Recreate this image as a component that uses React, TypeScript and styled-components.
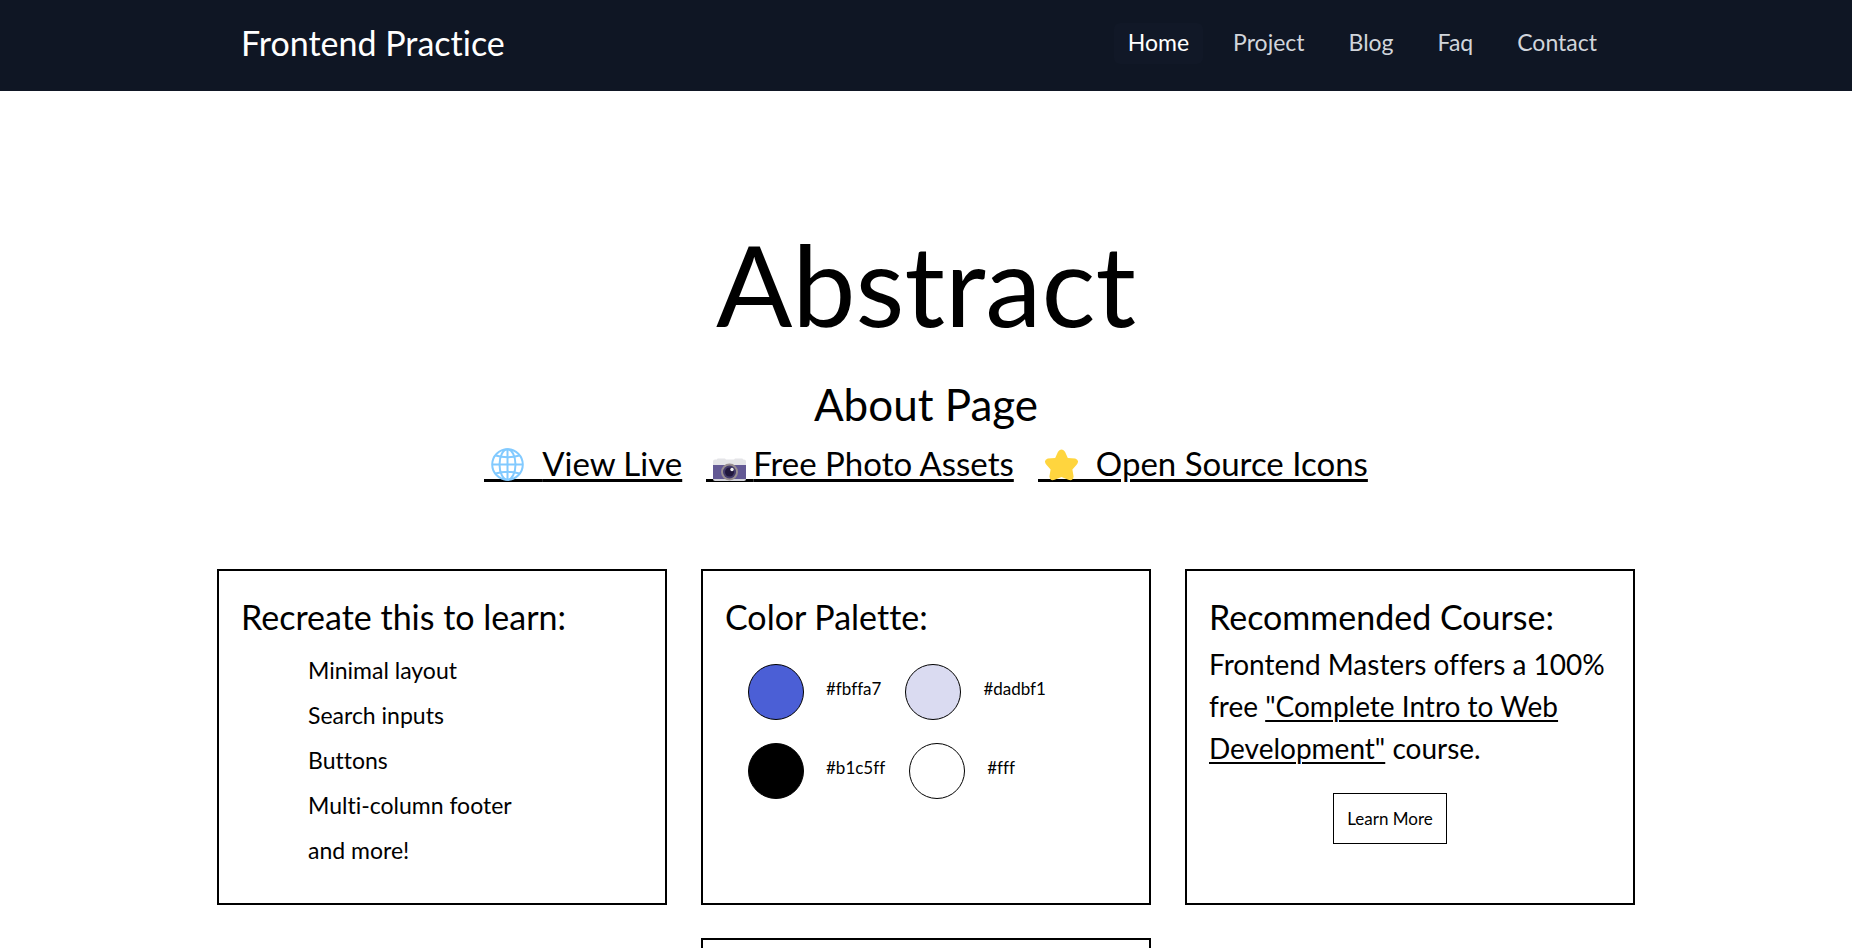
import React from "react";
import styled, { createGlobalStyle } from "styled-components";

const GlobalStyle = createGlobalStyle`
  *, *::before, *::after { box-sizing: border-box; }
  body {
    margin: 0;
    background: #fff;
    color: #000;
    font-family: Lato, "Liberation Sans", sans-serif;
    font-variant-ligatures: none;
  }
  h1, h2, h3, p, ul { margin: 0; padding: 0; font-weight: 400; }
  ul { list-style: none; }
  a { color: inherit; }
`;

const Header = styled.header`
  background: #0f1624;
  padding: 23px 24px 27px;
`;

const HeaderInner = styled.div`
  display: flex;
  flex-wrap: wrap;
  justify-content: space-between;
  align-items: flex-start;
  max-width: 1418px;
  margin: 0 auto;
  padding: 0 24px;
`;

const Brand = styled.a`
  color: #fff;
  font-size: 34px;
  line-height: 39px;
  text-decoration: none;
`;

const Nav = styled.nav`
  display: flex;
  flex-wrap: wrap;
  gap: 16px;
`;

const NavLink = styled.a<{ $active?: boolean }>`
  padding: 0 14px 2px;
  border-radius: 6px;
  background: ${(p) => (p.$active ? "#111827" : "transparent")};
  color: ${(p) => (p.$active ? "#fff" : "#d1d5db")};
  font-size: 23px;
  line-height: 39px;
  text-decoration: none;
`;

const Hero = styled.section`
  display: flex;
  flex-direction: column;
  align-items: center;
  padding: 122px 24px 77px;
  text-align: center;
`;

const Title = styled.h1`
  font-size: 113px;
  line-height: 140px;
`;

const Subtitle = styled.h2`
  margin-top: 21px;
  font-size: 44px;
  line-height: 60px;
`;

const HeroLinks = styled.div`
  display: flex;
  flex-wrap: wrap;
  justify-content: center;
  gap: 0 24px;
`;

const HeroLink = styled.a`
  font-size: 33px;
  line-height: 58px;
  text-decoration: underline 3px;
  text-underline-offset: 3px;
`;

/* Continues the link's underline beneath its icon. */
const IconSlot = styled.span<{ $wide?: boolean }>`
  display: inline-flex;
  align-items: flex-end;
  width: ${(p) => (p.$wide ? 58 : 47)}px;
  height: 34px;
  padding-left: 7px;
  border-bottom: 3px solid #000;
  vertical-align: -5px;

  svg {
    flex: none;
    width: 33px;
    height: 33px;
    margin-bottom: -2px;
  }
`;

const Cards = styled.main`
  display: grid;
  grid-template-columns: repeat(3, minmax(0, 1fr));
  gap: 33px 34px;
  max-width: 1418px;
  margin: 0 auto;

  @media (max-width: 1100px) {
    grid-template-columns: minmax(0, 1fr);
    padding: 0 24px;
  }
`;

const Card = styled.section<{ $middle?: boolean }>`
  min-height: 336px;
  padding: 24px 22px;
  border: 2px solid #000;

  @media (min-width: 1101px) {
    grid-column: ${(p) => (p.$middle ? "2" : "auto")};
  }
`;

const CardTitle = styled.h3`
  font-size: 34px;
  line-height: 44px;
`;

const TopicList = styled.ul`
  padding: 9px 0 0 67px;
  font-size: 23px;
  line-height: 45px;
`;

const Palette = styled.div`
  display: flex;
  flex-direction: column;
  gap: 23px;
  padding: 25px 0 0 23px;
`;

const PaletteRow = styled.div`
  display: flex;
  gap: 24px;
`;

const Swatch = styled.div`
  display: flex;
  align-items: center;
  gap: 22px;
`;

const Dot = styled.span<{ $color: string }>`
  width: 56px;
  height: 56px;
  border: 1px solid #000;
  border-radius: 50%;
  background: ${(p) => p.$color};
`;

const SwatchLabel = styled.span`
  padding-bottom: 6px;
  font-size: 17px;
  line-height: 24px;
`;

const CourseText = styled.p`
  margin-top: 4px;
  font-size: 28px;
  line-height: 42px;

  a {
    text-decoration-thickness: 2px;
    text-underline-offset: 3px;
  }
`;

const CardAction = styled.div`
  display: flex;
  justify-content: center;
  margin-top: 24px;
  padding-right: 40px;
`;

const Button = styled.button`
  padding: 12px 13px;
  border: 1px solid #000;
  background: #fff;
  color: #000;
  font: inherit;
  font-size: 17px;
  line-height: 25px;
  cursor: pointer;
`;

const GlobeIcon = () => (
  <svg viewBox="0 0 33 33" fill="none" stroke="#82caff" strokeWidth="2" aria-hidden="true">
    <circle cx="16.5" cy="16.5" r="15.3" />
    <ellipse cx="16.5" cy="16.5" rx="8" ry="15.3" />
    <path d="M16.5 1v31M1 16.5h31M4.5 7.5Q16.5 11 28.5 7.5M4.5 25.5Q16.5 22 28.5 25.5" />
  </svg>
);

const CameraIcon = () => (
  <svg viewBox="0 0 33 33" aria-hidden="true">
    <path d="M5 10.5h7l1 1h8l1-1h7q1 0 1 1h1q2 0 2 2V18H0v-4.500q0-2 2-2h2q0-1 1-1z" fill="#e4e4e7" />
    <path d="M0 17h33v14H0z" fill="#635994" />
    <path d="M0 31h33q0 2-2 2H2q-2 0-2-2z" fill="#d3d3d9" />
    <circle cx="16.500" cy="24" r="8.500" fill="#998f91" />
    <circle cx="16.500" cy="24" r="6.500" fill="#433b6b" />
    <circle cx="16.500" cy="24" r="4.500" fill="#21183c" />
    <circle cx="19" cy="21.500" r="1.700" fill="#f4f4f4" />
  </svg>
);

const StarIcon = () => (
  <svg viewBox="0 0 33 33" fill="#ffd53e" aria-hidden="true">
    <path d="M13 3.800Q16.500-.8 20 3.800L22.800 10L30.200 10.600Q35 12.400 31.600 16.800L27.400 21.500L28.600 28.500Q28 33.400 23.300 31.700L16.500 29L9.700 31.700Q5 33.400 4.400 28.500L5.600 21.500L1.400 16.800Q-2 12.400 2.800 10.600L10.200 10Z" />
  </svg>
);

const navItems = ["Home", "Project", "Blog", "Faq", "Contact"];
const topics = ["Minimal layout", "Search inputs", "Buttons", "Multi-column footer", "and more!"];
const palette = [
  [
    { label: "#fbffa7", color: "#4b5fd6" },
    { label: "#dadbf1", color: "#dadbf1" },
  ],
  [
    { label: "#b1c5ff", color: "#000" },
    { label: "#fff", color: "#fff" },
  ],
];

export default function App() {
  return (
    <>
      <GlobalStyle />
      <Header>
        <HeaderInner>
          <Brand href="#">Frontend Practice</Brand>
          <Nav>
            {navItems.map((item, i) => (
              <NavLink key={item} href="#" $active={i === 0}>
                {item}
              </NavLink>
            ))}
          </Nav>
        </HeaderInner>
      </Header>
      <Hero>
        <Title>Abstract</Title>
        <Subtitle>About Page</Subtitle>
        <HeroLinks>
          <HeroLink href="#">
            <IconSlot $wide><GlobeIcon /></IconSlot>View Live
          </HeroLink>
          <HeroLink href="#">
            <IconSlot><CameraIcon /></IconSlot>Free Photo Assets
          </HeroLink>
          <HeroLink href="#">
            <IconSlot $wide><StarIcon /></IconSlot>Open Source Icons
          </HeroLink>
        </HeroLinks>
      </Hero>
      <Cards>
        <Card>
          <CardTitle>Recreate this to learn:</CardTitle>
          <TopicList>
            {topics.map((topic) => (
              <li key={topic}>{topic}</li>
            ))}
          </TopicList>
        </Card>
        <Card>
          <CardTitle>Color Palette:</CardTitle>
          <Palette>
            {palette.map((row) => (
              <PaletteRow key={row[0].label}>
                {row.map((s) => (
                  <Swatch key={s.label}>
                    <Dot $color={s.color} />
                    <SwatchLabel>{s.label}</SwatchLabel>
                  </Swatch>
                ))}
              </PaletteRow>
            ))}
          </Palette>
        </Card>
        <Card>
          <CardTitle>Recommended Course:</CardTitle>
          <CourseText>
            Frontend Masters offers a 100% free <a href="#">"Complete Intro to Web Development"</a> course.
          </CourseText>
          <CardAction>
            <Button type="button">Learn More</Button>
          </CardAction>
        </Card>
        <Card $middle />
      </Cards>
    </>
  );
}
